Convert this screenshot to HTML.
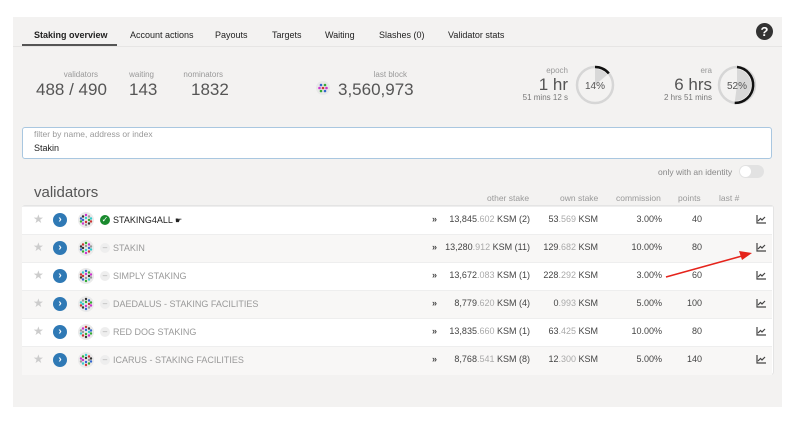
<!DOCTYPE html>
<html><head><meta charset="utf-8"><style>
body{margin:0;width:800px;height:426px;background:#fff;font-family:"Liberation Sans",sans-serif;position:relative;overflow:hidden}
.abs{position:absolute}
#panel{left:13px;top:17px;width:769px;height:390px;background:#f3f2f1}
.tab{top:30px;font-size:9px;color:#222}
.lbl{font-size:8px;color:#999;text-align:right}
.big{font-size:17px;color:#555}
.row{left:22px;width:750px;height:28px}
.cell{font-size:9px;color:#444;top:9px;white-space:nowrap}
.dim{color:#aaa}
.hd{font-size:8.5px;color:#999;top:193px}
</style></head><body>
<div id="panel" class="abs"></div>
<div class="abs" style="left:13px;top:46px;width:769px;height:1px;background:#e6e5e4"></div>
<div class="abs tab" style="left:34px;font-weight:bold">Staking overview</div>
<div class="abs" style="left:22px;top:44px;width:95px;height:2px;background:#555"></div>
<div class="abs tab" style="left:130px">Account actions</div>
<div class="abs tab" style="left:215px">Payouts</div>
<div class="abs tab" style="left:272px">Targets</div>
<div class="abs tab" style="left:325px">Waiting</div>
<div class="abs tab" style="left:379px">Slashes (0)</div>
<div class="abs tab" style="left:448px">Validator stats</div>
<div class="abs" style="left:756px;top:23px;width:17px;height:17px;border-radius:50%;background:#333;color:#fff;font-weight:bold;font-size:13px;text-align:center;line-height:17px">?</div>

<div class="abs lbl" style="left:40px;top:70px;width:58px">validators</div>
<div class="abs big" style="left:36px;top:80px">488 / 490</div>
<div class="abs lbl" style="left:120px;top:70px;width:34px">waiting</div>
<div class="abs big" style="left:129px;top:80px">143</div>
<div class="abs lbl" style="left:183px;top:70px;width:40px">nominators</div>
<div class="abs big" style="left:191px;top:80px">1832</div>
<div class="abs lbl" style="left:360px;top:70px;width:47px">last block</div>
<svg class="abs" style="left:316px;top:81px" width="14" height="14" viewBox="0 0 14 14"><circle cx="7" cy="7" r="7" fill="#e8e8e8"/><g fill="#36c"><circle cx="5" cy="4" r="1.3"/><circle cx="9" cy="4" r="1.3" fill="#3a3"/><circle cx="3.5" cy="7" r="1.3" fill="#c3c"/><circle cx="7" cy="7" r="1.3" fill="#c33"/><circle cx="10.5" cy="7" r="1.3" fill="#c3c"/><circle cx="5" cy="10" r="1.3" fill="#3a3"/><circle cx="9" cy="10" r="1.3"/></g></svg>
<div class="abs big" style="left:338px;top:80px">3,560,973</div>

<div class="abs lbl" style="left:520px;top:66px;width:48px">epoch</div>
<div class="abs big" style="left:520px;top:75px;width:48px;text-align:right">1 hr</div>
<div class="abs lbl" style="left:500px;top:93px;width:68px;color:#777">51 mins 12 s</div>
<div class="abs lbl" style="left:660px;top:66px;width:52px">era</div>
<div class="abs big" style="left:640px;top:75px;width:72px;text-align:right">6 hrs</div>
<div class="abs lbl" style="left:640px;top:93px;width:72px;color:#777">2 hrs 51 mins</div>
<svg class="abs" style="left:574px;top:64px" width="42" height="42" viewBox="0 0 42 42">
<circle cx="21" cy="21" r="18" fill="#f3f2f1" stroke="#d6d6d6" stroke-width="2.5"/>
<path d="M21 21 L21 5 A16 16 0 0 1 33.3 10.8 Z" fill="#d8d8d8"/>
<path d="M21 3 A18 18 0 0 1 34.8 9.4" fill="none" stroke="#111" stroke-width="2.5"/>
<text x="21" y="25" text-anchor="middle" font-size="10" fill="#555" font-family="Liberation Sans">14%</text></svg>
<svg class="abs" style="left:716px;top:64px" width="42" height="42" viewBox="0 0 42 42">
<circle cx="21" cy="21" r="18" fill="#f3f2f1" stroke="#d6d6d6" stroke-width="2.5"/>
<path d="M21 21 L21 5 A16 16 0 0 1 18.9 36.9 Z" fill="#d8d8d8"/>
<path d="M21 3 A18 18 0 0 1 18.7 38.9" fill="none" stroke="#111" stroke-width="2.5"/>
<text x="21" y="25" text-anchor="middle" font-size="10" fill="#555" font-family="Liberation Sans">52%</text></svg>

<div class="abs" style="left:22px;top:127px;width:748px;height:30px;background:#fff;border:1px solid #a9c7e0;border-radius:3px"></div>
<div class="abs" style="left:34px;top:129px;font-size:8.5px;color:#999">filter by name, address or index</div>
<div class="abs" style="left:34px;top:143px;font-size:9px;color:#222">Stakin</div>

<div class="abs" style="left:658px;top:167px;font-size:8.5px;color:#888">only with an identity</div>
<div class="abs" style="left:739px;top:165px;width:25px;height:13px;border-radius:7px;background:#e2e2e2"></div>
<div class="abs" style="left:740px;top:166px;width:11px;height:11px;border-radius:50%;background:#fff"></div>

<div class="abs" style="left:34px;top:184px;font-size:15px;color:#555">validators</div>
<div class="abs hd" style="left:487px">other stake</div>
<div class="abs hd" style="left:560px">own stake</div>
<div class="abs hd" style="left:616px">commission</div>
<div class="abs hd" style="left:678px">points</div>
<div class="abs hd" style="left:719px">last #</div>

<div class="abs" style="left:22px;top:205px;width:750px;height:168px;border:1px solid #e4e4e4;border-radius:3px;background:#fff"></div>

<div id="rows"></div>
<script>
var d=[["STAKING4ALL",1,"13,845",".602","(2)","53",".569","3.00%","40"],
["STAKIN",0,"13,280",".912","(11)","129",".682","10.00%","80"],
["SIMPLY STAKING",0,"13,672",".083","(1)","228",".292","3.00%","60"],
["DAEDALUS - STAKING FACILITIES",0,"8,779",".620","(4)","0",".993","5.00%","100"],
["RED DOG STAKING",0,"13,835",".660","(1)","63",".425","10.00%","80"],
["ICARUS - STAKING FACILITIES",0,"8,768",".541","(8)","12",".300","5.00%","140"]];
var cols=["#c3c","#3a3","#36c","#333","#c33","#3cc","#999"];
var h="";
d.forEach(function(r,i){var t=206+i*28;var bg=i%2?"#f8f7f6":"#fff";
h+='<div class="abs row" style="top:'+t+'px;background:'+bg+';border-top:1px solid #eee"></div>';
var c=t+14;
h+='<div class="abs" style="left:33px;top:'+(c-8)+'px;font-size:12px;color:#ccc">★</div>';
h+='<div class="abs" style="left:53px;top:'+(c-7)+'px;width:14px;height:14px;border-radius:50%;background:#2f79b5;color:#fff;font-size:10px;line-height:14px;text-align:center;font-weight:bold">›</div>';
var s='<svg class="abs" style="left:78px;top:'+(c-8)+'px" width="16" height="16" viewBox="0 0 16 16"><circle cx="8" cy="8" r="8" fill="#eaeaea"/>';
var pts=[[8,3],[5,4.5],[11,4.5],[5,8],[8,6],[11,8],[8,10],[5,11.5],[11,11.5],[8,13],[3,6.5],[13,6.5],[3,9.5],[13,9.5]];
pts.forEach(function(p,k){s+='<circle cx="'+p[0]+'" cy="'+p[1]+'" r="1.2" fill="'+cols[(k*3+i)%7]+'"/>';});
h+=s+'</svg>';
if(r[1]){h+='<div class="abs" style="left:100px;top:'+(c-5)+'px;width:10px;height:10px;border-radius:50%;background:#1a8a2e;color:#fff;font-size:8px;line-height:10px;text-align:center">✓</div>';
h+='<div class="abs" style="left:113px;top:'+(c-5)+'px;font-size:9px;color:#222">'+r[0]+' <span style="font-size:8px">☛</span></div>';}
else{h+='<div class="abs" style="left:100px;top:'+(c-5)+'px;width:10px;height:10px;border-radius:50%;background:#eee;color:#aaa;font-size:8px;line-height:10px;text-align:center">–</div>';
h+='<div class="abs" style="left:113px;top:'+(c-5)+'px;font-size:9px;color:#999">'+r[0]+'</div>';}
h+='<div class="abs" style="left:432px;top:'+(c-6)+'px;font-size:9px;font-weight:bold;color:#444">»</div>';
h+='<div class="abs cell" style="right:270px;top:'+(c-6)+'px">'+r[2]+'<span class="dim">'+r[3]+'</span> KSM '+r[4]+'</div>';
h+='<div class="abs cell" style="right:202px;top:'+(c-6)+'px">'+r[5]+'<span class="dim">'+r[6]+'</span> KSM</div>';
h+='<div class="abs cell" style="right:138px;top:'+(c-6)+'px">'+r[7]+'</div>';
h+='<div class="abs cell" style="right:98px;top:'+(c-6)+'px">'+r[8]+'</div>';
h+='<svg class="abs" style="left:756px;top:'+(c-5)+'px" width="10" height="9" viewBox="0 0 10 9"><path d="M1 0V8H10" fill="none" stroke="#444" stroke-width="1.2"/><path d="M2 6L4.5 3.5L6 5L9 2" fill="none" stroke="#444" stroke-width="1.2"/></svg>';
});
document.getElementById("rows").innerHTML=h;
</script>
<svg class="abs" style="left:0;top:0" width="800" height="426"><line x1="666" y1="277" x2="742" y2="256" stroke="#e5231b" stroke-width="1.6"/><polygon points="752,253 739,251 742,260" fill="#e5231b"/></svg>
</body></html>
